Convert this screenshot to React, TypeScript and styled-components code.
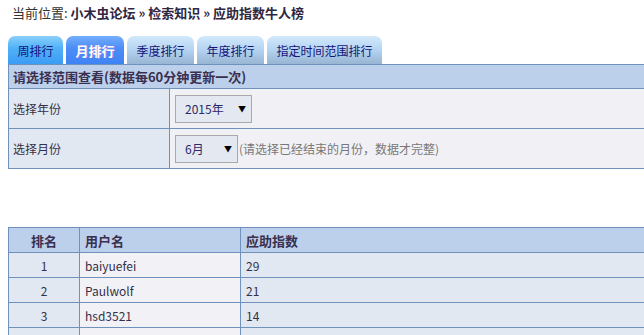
import styled, { createGlobalStyle } from "styled-components";

const GlobalStyle = createGlobalStyle`
  html, body {
    margin: 0;
    padding: 0;
    background: #fff;
    overflow: hidden;
  }
  body {
    font-family: "Noto Sans CJK SC", "Noto Sans", sans-serif;
    font-size: 12px;
    color: #35304a;
  }
`;

const Page = styled.div`
  padding: 0 0 0 8px;
  width: 900px;
`;

const Breadcrumb = styled.div`
  padding: 3px 0 0 4px;
  height: 20px;
  line-height: 20px;
  font-size: 13px;
  color: #333;

  b {
    color: #2f2640;
  }
`;

const TabBar = styled.div`
  display: flex;
  gap: 3px;
  margin-top: 13px;
  height: 28px;
  align-items: flex-end;
`;

const Tab = styled.div<{ $variant: "hover" | "active" | "normal" }>`
  height: 28px;
  padding: 0 9.5px;
  border-radius: 7px 7px 0 0;
  display: flex;
  align-items: center;
  justify-content: center;
  font-size: ${({ $variant }) => ($variant === "active" ? "13px" : "12px")};
  font-weight: ${({ $variant }) => ($variant === "active" ? 700 : 400)};
  color: ${({ $variant }) => ($variant === "active" ? "#fff" : "#141478")};
  text-shadow: ${({ $variant }) =>
    $variant === "active" ? "1px 0 0 rgba(220, 120, 220, 0.6)" : "none"};
  background: ${({ $variant }) =>
    $variant === "active"
      ? "linear-gradient(#74aefc, #4b8cf7 45%, #3f82f4)"
      : $variant === "hover"
        ? "linear-gradient(#8ad0fb, #4fb0f8 45%, #3b9cf5)"
        : "linear-gradient(#d2e9fc, #b4d3f1 50%, #98b5d3)"};
`;

const RangeTable = styled.table`
  border-collapse: collapse;
  width: 100%;
  margin-bottom: 58px;

  th,
  td {
    border: 1px solid #6f92bc;
    padding: 0;
  }
`;

const PanelHead = styled.th`
  background: #bcd0ec;
  height: 23px;
  text-align: left;
  padding-left: 4px !important;
  font-size: 13px;
  font-weight: 700;
  color: #3a2f4e;
`;

const LabelCell = styled.td`
  width: 156px;
  height: 39px;
  background: #e1e8f1;
  padding-left: 4px !important;
  color: #35304a;
`;

const FieldCell = styled.td`
  background: #f1f1f5;
  padding-left: 5px !important;
`;

const FieldRow = styled.div`
  display: flex;
  align-items: center;
`;

const SelectBox = styled.div<{ $width: number }>`
  width: ${({ $width }) => $width}px;
  height: 28px;
  box-sizing: border-box;
  border: 1px solid #a9a9a9;
  background: #e4e9f1;
  display: flex;
  align-items: center;
  justify-content: space-between;
  padding: 0 5px 0 9px;
  color: #2a2a6a;
  font-size: 12px;
`;

const Arrow = styled.span`
  font-size: 8px;
  color: #000;
`;

const Hint = styled.span`
  color: #777;
  margin-left: 1px;
`;

const RankTable = styled.table`
  border-collapse: collapse;
  width: 100%;

  th,
  td {
    border: 1px solid #6f92bc;
    padding: 0 5px;
    height: 24px;
  }

  th {
    background: #bcd0ec;
    font-size: 13px;
    font-weight: 700;
    color: #3a2f4e;
    text-align: left;
  }

  td {
    color: #35304a;
  }
`;

const Col = styled.td<{ $tone: "blue" | "grey"; $center?: boolean }>`
  background: ${({ $tone }) => ($tone === "blue" ? "#e1e8f1" : "#f2f2f6")};
  text-align: ${({ $center }) => ($center ? "center" : "left")};
`;

const HeadCenter = styled.th`
  width: 60px;
  text-align: center !important;
`;

const NameHead = styled.th`
  width: 150px;
`;

const tabs: { label: string; variant: "hover" | "active" | "normal" }[] = [
  { label: "周排行", variant: "hover" },
  { label: "月排行", variant: "active" },
  { label: "季度排行", variant: "normal" },
  { label: "年度排行", variant: "normal" },
  { label: "指定时间范围排行", variant: "normal" },
];

const ranks = [
  { rank: "1", name: "baiyuefei", score: "29" },
  { rank: "2", name: "Paulwolf", score: "21" },
  { rank: "3", name: "hsd3521", score: "14" },
  { rank: "", name: "", score: "" },
];

export default function App() {
  return (
    <>
      <GlobalStyle />
      <Page>
        <Breadcrumb>
          当前位置: <b>小木虫论坛 » 检索知识 » 应助指数牛人榜</b>
        </Breadcrumb>

        <TabBar>
          {tabs.map((t) => (
            <Tab key={t.label} $variant={t.variant}>
              {t.label}
            </Tab>
          ))}
        </TabBar>

        <RangeTable>
          <thead>
            <tr>
              <PanelHead colSpan={2}>请选择范围查看(数据每60分钟更新一次)</PanelHead>
            </tr>
          </thead>
          <tbody>
            <tr>
              <LabelCell>选择年份</LabelCell>
              <FieldCell>
                <FieldRow>
                  <SelectBox $width={77}>
                    2015年 <Arrow>▼</Arrow>
                  </SelectBox>
                </FieldRow>
              </FieldCell>
            </tr>
            <tr>
              <LabelCell>选择月份</LabelCell>
              <FieldCell>
                <FieldRow>
                  <SelectBox $width={63}>
                    6月 <Arrow>▼</Arrow>
                  </SelectBox>
                  <Hint>(请选择已经结束的月份，数据才完整)</Hint>
                </FieldRow>
              </FieldCell>
            </tr>
          </tbody>
        </RangeTable>

        <RankTable>
          <thead>
            <tr>
              <HeadCenter>排名</HeadCenter>
              <NameHead>用户名</NameHead>
              <th>应助指数</th>
            </tr>
          </thead>
          <tbody>
            {ranks.map((r, i) => (
              <tr key={i}>
                <Col $tone="blue" $center>
                  {r.rank}
                </Col>
                <Col $tone="grey">{r.name}</Col>
                <Col $tone="blue">{r.score}</Col>
              </tr>
            ))}
          </tbody>
        </RankTable>
      </Page>
    </>
  );
}
